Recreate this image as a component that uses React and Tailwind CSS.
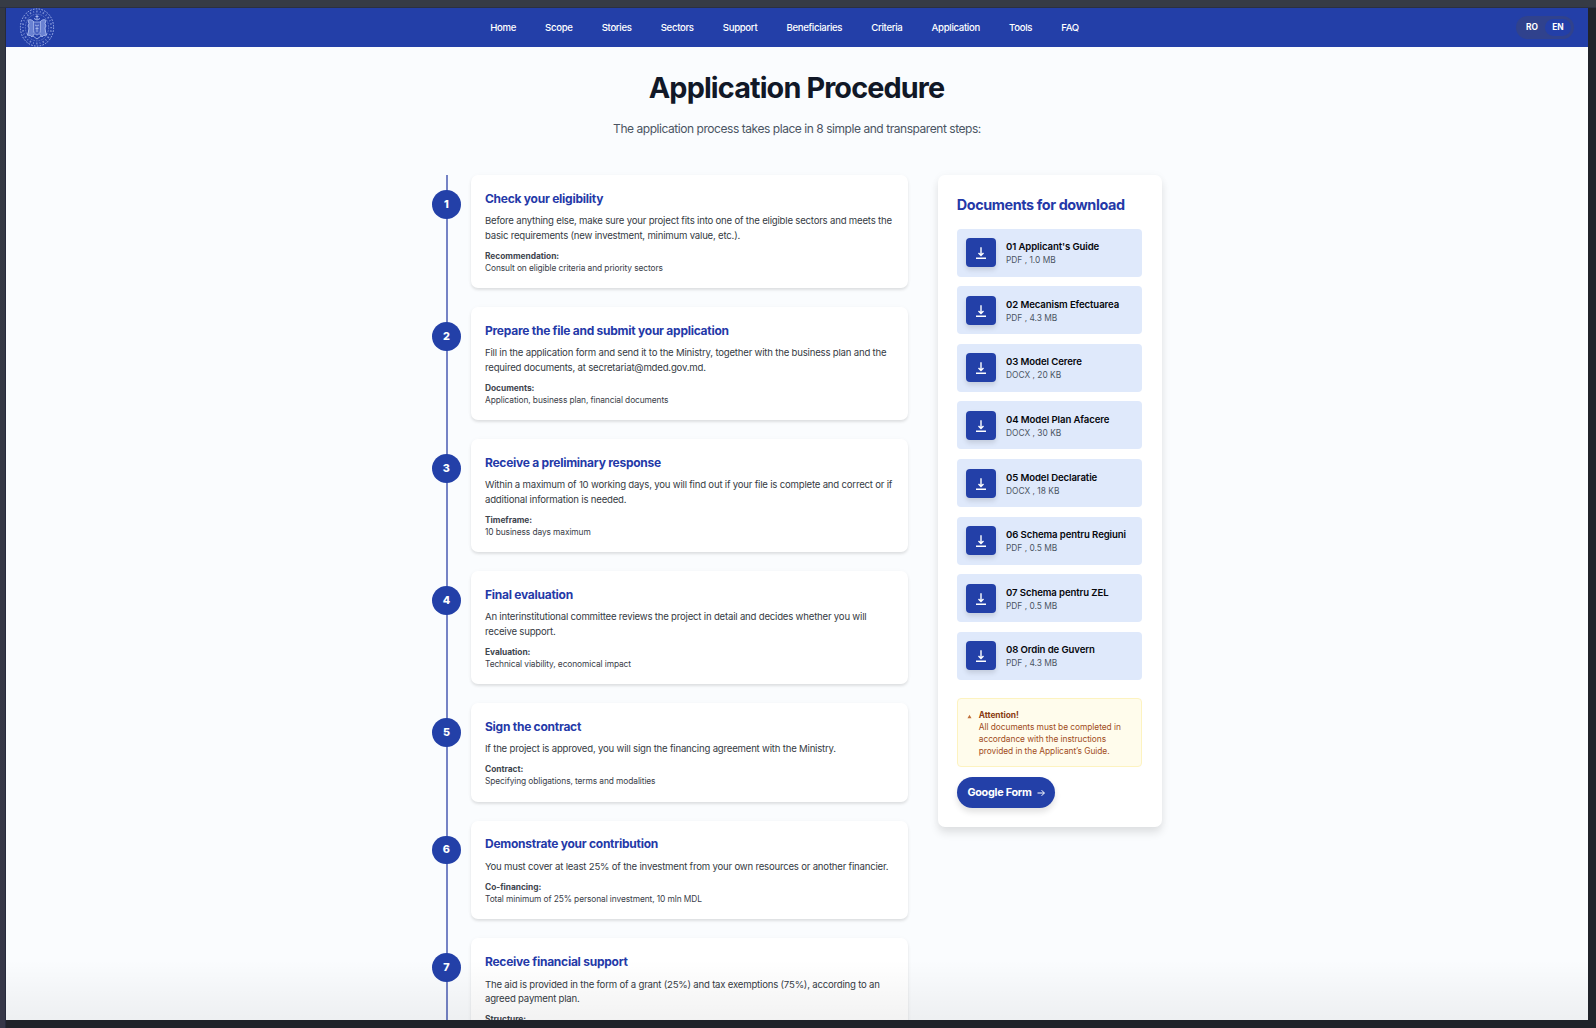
const NAV = ["Home", "Scope", "Stories", "Sectors", "Support", "Beneficiaries", "Criteria", "Application", "Tools", "FAQ"];

const STEPS = [
  ["Check your eligibility", ["Before anything else, make sure your project fits into one of the eligible sectors and meets the", "basic requirements (new investment, minimum value, etc.)."], "Recommendation:", "Consult on eligible criteria and priority sectors"],
  ["Prepare the file and submit your application", ["Fill in the application form and send it to the Ministry, together with the business plan and the", "required documents, at secretariat@mded.gov.md."], "Documents:", "Application, business plan, financial documents"],
  ["Receive a preliminary response", ["Within a maximum of 10 working days, you will find out if your file is complete and correct or if", "additional information is needed."], "Timeframe:", "10 business days maximum"],
  ["Final evaluation", ["An interinstitutional committee reviews the project in detail and decides whether you will", "receive support."], "Evaluation:", "Technical viability, economical impact"],
  ["Sign the contract", ["If the project is approved, you will sign the financing agreement with the Ministry."], "Contract:", "Specifying obligations, terms and modalities"],
  ["Demonstrate your contribution", ["You must cover at least 25% of the investment from your own resources or another financier."], "Co-financing:", "Total minimum of 25% personal investment, 10 mln MDL"],
  ["Receive financial support", ["The aid is provided in the form of a grant (25%) and tax exemptions (75%), according to an", "agreed payment plan."], "Structure:", null],
];

const DOCS = [
  ["01 Applicant's Guide", "PDF , 1.0 MB"],
  ["02 Mecanism Efectuarea", "PDF , 4.3 MB"],
  ["03 Model Cerere", "DOCX , 20 KB"],
  ["04 Model Plan Afacere", "DOCX , 30 KB"],
  ["05 Model Declaratie", "DOCX , 18 KB"],
  ["06 Schema pentru Regiuni", "PDF , 0.5 MB"],
  ["07 Schema pentru ZEL", "PDF , 0.5 MB"],
  ["08 Ordin de Guvern", "PDF , 4.3 MB"],
];

function Seal() {
  return (
    <svg viewBox="0 0 36 39" className="h-[39px] w-9 shrink-0" fill="none" stroke="#b0c0f0">
      <ellipse cx="18" cy="19.5" rx="16.6" ry="18.6" strokeWidth="0.9" strokeDasharray="1.6 1.3" />
      <ellipse cx="18" cy="19.5" rx="14.2" ry="16" strokeWidth="1.8" strokeDasharray="0.8 2.1 1.5 2.3" opacity="0.6" />
      <ellipse cx="18" cy="19.5" rx="11.6" ry="13.4" strokeWidth="0.6" strokeDasharray="1.8 0.9" opacity="0.7" />
      <path d="M16.500 8.500h3M18 6.500v4.500M15 10.500l3 1.500 3-1.500" strokeWidth="0.9" />
      <path d="M15 14c-2-2.500-4.500-3-6-1.500l1 3-1 2.500 1 2-.6 4-1 3 3 .5 1.500 1.500 2.500-3M21 14c2-2.500 4.500-3 6-1.500l-1 3 1 2.500-1 2 .6 4 1 3-3 .5-1.500 1.500-2.500-3" fill="#8fa5e6" fillOpacity="0.65" strokeWidth="0.9" />
      <path d="M14.500 14h7v8.500c0 2.500-2 4-3.500 4.500-1.500-.5-3.500-2-3.500-4.500z" fill="#4a63c0" strokeWidth="0.7" />
      <path d="M16 17l2 1 2-1M16.500 20.500h3M18 19v5M14 28l4 3 4-3" strokeWidth="0.8" />
    </svg>
  );
}

function DownloadIcon() {
  return (
    <svg viewBox="0 0 12 14" className="mt-px h-[14px] w-3" fill="none" stroke="white" strokeWidth="1.4">
      <path d="M6 1.300v8M3.500 6.900L6 9.400l2.500-2.500M1 12.300h10" />
    </svg>
  );
}

function Step({ index, step }) {
  const [title, lines, label, note] = step;
  return (
    <div className="relative flex gap-[9.6px]">
      <div className="mt-[14.8px] flex size-[28.8px] shrink-0 items-center justify-center rounded-full bg-[#2340a8] pt-[0.800px] pr-[0.800px] text-[10.800px] font-extrabold text-white">
        {index}
      </div>
      <div className="min-w-0 flex-1 rounded-[7px] bg-white px-[14.2px] pt-[15.500px] pb-[14.100px] shadow-[0_2px_3px_rgba(0,0,0,0.11),0_0_6px_rgba(0,0,0,0.02)]">
        <h3 className="mb-[7px] text-[12px] leading-[16.8px] font-bold tracking-[-0.25px] text-[#2439a8]">{title}</h3>
        <div className="mb-[6.600px] text-[9.6px] leading-[14.4px] tracking-[-0.2px] text-[#353b44]">
          {lines.map((l) => <p key={l} className="whitespace-nowrap">{l}</p>)}
        </div>
        <p className="text-[8.4px] leading-[12px] font-bold tracking-[-0.03px] text-[#41464f]">{label}</p>
        {note && <p className="text-[8.4px] leading-[12px] tracking-[-0.1px] text-[#3a4049]">{note}</p>}
      </div>
    </div>
  );
}

export default function App() {
  return (
    <div className="flex h-[1028px] w-[1596px] flex-col overflow-hidden bg-[#363a45] font-['Inter',sans-serif]">
      <div className="h-[8px] border-b border-[#2b3040] bg-[#363b45]" />
      <div className="flex flex-1 bg-linear-to-b from-[#343943] to-[#363748]">
        <div className="w-[6px] border-r border-[#262a3c]" />
        <div className="flex flex-1 flex-col bg-[#20232a]">
          <div className="relative h-[1012px] w-[1582px] overflow-hidden bg-[#fafcfe]">
            <header className="flex h-[39px] items-center justify-between bg-[#233fa8] pr-[14px] pl-[13px]">
              <div className="flex w-[120px]"><Seal /></div>
              <nav className="mr-[24px] flex gap-[29.1px] pt-px text-[9.6px] font-medium tracking-[-0.32px] text-white">
                {NAV.map((n) => <a key={n}>{n}</a>)}
              </nav>
              <div className="flex w-[120px] justify-end">
                <div className="flex h-[23px] w-[58px] items-center rounded-full bg-[#30428d] px-[3px] text-[8.400px] font-bold text-white">
                  <span className="flex-1 text-center">RO</span>
                  <span className="flex h-[17px] w-[26px] items-center justify-center rounded-full bg-[#233fa8]">EN</span>
                </div>
              </div>
            </header>

            <main className="mx-auto w-[729.2px]">
              <h1 className="mt-[23px] pr-[1px] text-center text-[28.8px] leading-[36px] font-bold tracking-[-0.87px] text-[#111827]">Application Procedure</h1>
              <p className="mt-[14px] text-center text-[12px] leading-[17px] tracking-[-0.45px] text-[#4b5563]">The application process takes place in 8 simple and transparent steps:</p>

              <div className="mt-[38.200px] flex items-start justify-between">
                <section className="relative flex w-[476px] flex-col gap-[19.2px]">
                  <div className="absolute top-0 bottom-0 left-[13.600px] w-[2px] bg-[#7583c5]" />
                  {STEPS.map((s, i) => <Step key={s[0]} index={i + 1} step={s} />)}
                </section>

                <aside className="w-[224px] rounded-[7px] bg-white p-[19.2px] shadow-[0_6px_9px_rgba(0,0,0,0.10),0_0_8px_rgba(0,0,0,0.03)]">
                  <h2 className="mb-[14.200px] pt-[0.900px] text-[14.4px] leading-[19.2px] font-bold tracking-[-0.4px] whitespace-nowrap text-[#2439a8]">Documents for download</h2>
                  <div className="flex flex-col gap-[9.6px]">
                    {DOCS.map(([name, meta]) => (
                      <div key={name} className="flex h-[48px] items-center gap-[9.6px] rounded-[4px] bg-[#dfe9fb] px-[9.6px]">
                        <div className="flex h-[29px] w-[30px] shrink-0 items-center justify-center rounded-[4px] bg-[#2340a8] shadow-[0_3px_5px_rgba(0,0,0,0.12)]">
                          <DownloadIcon />
                        </div>
                        <div className="pt-[1px] whitespace-nowrap">
                          <p className="text-[9.6px] leading-[14px] font-semibold tracking-[-0.1px] text-[#05070c]">{name}</p>
                          <p className="text-[8.4px] leading-[12px] text-[#4b5563]">{meta}</p>
                        </div>
                      </div>
                    ))}
                  </div>
                  <div className="mt-[18.300px] flex h-[69px] gap-[7px] rounded-[4px] border border-[#fdf3c0] bg-[#fffcec] px-[9px] pt-[9.600px]">
                    <svg viewBox="0 0 5 5" className="mt-[5px] size-[5px] shrink-0"><path d="M2.500 .8L4.500 4.300H.5z" fill="#c0703a" /></svg>
                    <div className="text-[8.4px] leading-[12px] tracking-[-0.06px] whitespace-nowrap text-[#a14d1c]">
                      <p className="font-bold text-[#8b3d14]">Attention!</p>
                      <p>All documents must be completed in</p>
                      <p>accordance with the instructions</p>
                      <p>provided in the Applicant’s Guide.</p>
                    </div>
                  </div>
                  <button className="mt-[9.600px] flex h-[31px] w-[98.500px] items-center justify-center gap-[5px] rounded-full bg-[#2340a8] pt-px text-[10.800px] font-bold tracking-[-0.25px] whitespace-nowrap text-white shadow-[0_4px_6px_rgba(0,0,0,0.12)]">
                    Google Form
                    <svg viewBox="0 0 8 8" className="size-2" fill="none" stroke="white" strokeWidth="1"><path d="M.5 4h6.800M4.600 1.200L7.400 4 4.600 6.800" /></svg>
                  </button>
                </aside>
              </div>
            </main>
            <div className="absolute inset-x-0 bottom-0 h-[60px] bg-linear-to-b from-transparent to-black/5" />
          </div>
        </div>
      </div>
    </div>
  );
}
